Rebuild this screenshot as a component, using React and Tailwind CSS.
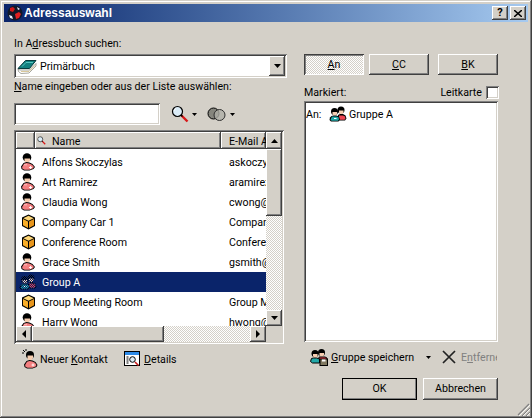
const outset = "shadow-[inset_-1px_-1px_0_#404040,inset_1px_1px_0_#ffffff,inset_-2px_-2px_0_#808080,inset_2px_2px_0_#d4d0c8]";
const inset = "shadow-[inset_1px_1px_0_#808080,inset_-1px_-1px_0_#ffffff,inset_2px_2px_0_#404040,inset_-2px_-2px_0_#d4d0c8]";
const dither = "bg-[repeating-conic-gradient(#ffffff_0_25%,#d4d0c8_0_50%)] bg-[length:2px_2px]";

const Tri = ({ d = "down", small }) => {
  const p = { down: "0,0 7,0 3.5,4", up: "0,4 7,4 3.5,0", left: "4,0 4,8 0,4", right: "0,0 0,8 4,4" }[d];
  const side = d === "left" || d === "right";
  const box = side ? "0 0 4 8" : "0 0 7 4";
  return <svg width={side ? 4 : small ? 5 : 7} height={side ? 8 : small ? 3 : 4} viewBox={box}><polygon points={p} fill="#000" /></svg>;
};

const Person = () => (
  <svg width="16" height="18" viewBox="0 0 16 18">
    <ellipse cx="7" cy="4.500" rx="4.300" ry="4.200" fill="#000" />
    <path d="M4.500 5.500h5.500v2l-1.500 2h-3l-1-1.500z" fill="#f6cdb0" />
    <path d="M3.500 10l3-1 3 .5 3 1.500 2.500 3-1.500 2-4 1.500H4l-2.500-1.500L1 13.500z" fill="#000" />
    <path d="M4 10.800l2.500-.8 2.800.5 2.700 1.300 2 2.300-1.300 1.500-3.200 1.200H4.500l-2-1.100-.4-1.700z" fill="#f47f80" />
    <path d="M4 11.800h3" stroke="#ffc4c0" />
    <path d="M9 14.500h3M10.500 13v3" stroke="#fff" strokeWidth=".9" />
  </svg>
);
const Cube = () => (
  <svg width="15" height="16" viewBox="0 0 15 16">
    <path d="M7.500 .5l6.500 3v8.500l-6.500 3.500-6.500-3.500V3.500z" fill="#000" />
    <path d="M7.500 1.800l5.200 2.400-5.200 2.500-5.200-2.500z" fill="#ffd777" />
    <path d="M2 5l5 2.400V14l-5-2.700z" fill="#f8ae2a" />
    <path d="M8 7.400L13 5v6.300L8 14z" fill="#e8961c" />
  </svg>
);
const Group = ({ sel }) => (
  <svg width="18" height="16" viewBox="0 0 18 16">
    <defs>
      <pattern id="navychk" width="2" height="2" patternUnits="userSpaceOnUse">
        <rect width="1" height="1" fill="#0a246a" />
        <rect x="1" y="1" width="1" height="1" fill="#0a246a" />
      </pattern>
    </defs>
    <ellipse cx="12" cy="4" rx="3.500" ry="3.500" fill="#000" />
    <path d="M10 4.500h4.500v2l-1 1.500h-2.500l-1-1.500z" fill="#f6cdb0" />
    <path d="M9 9l2-1h3l2.500 1.500 1 3-1.500 2H9z" fill="#000" />
    <path d="M10 9.500h4l2 1 .5 2-1 1.200H10z" fill="#ee4450" />
    <ellipse cx="5.500" cy="5.500" rx="3.500" ry="3.500" fill="#000" />
    <path d="M3.500 6h4.500v2l-1 1.500H4.500l-1-1.500z" fill="#f6cdb0" />
    <path d="M2.500 10l2-.5h3l2.500 1 1 3-1.500 2H2L.5 14l.5-2.500z" fill="#000" />
    <path d="M3 10.500h4.500l2 .7.5 2-1 1.500H2.500L1.500 13.500z" fill="#22a8a8" />
    <path d="M5 12.500h2.500" stroke="#fff" />
    {sel && <rect width="18" height="16" fill="url(#navychk)" />}
  </svg>
);
const Book = () => (
  <svg width="20" height="15" viewBox="0 0 20 15">
    <path d="M1 9.500L8.500 1.500H19l-6.500 8z" fill="#12807f" stroke="#08393c" />
    <path d="M5 7.500l4-4h7" stroke="#58c4c0" fill="none" />
    <path d="M1 10l.5 2.500 2.500 2 8-.5 7-7V4.500l-6.500 6.500H3z" fill="#fff" stroke="#6b6b60" strokeWidth=".6" />
    <path d="M4 12.500h8l6-6" stroke="#c8b070" strokeWidth=".7" fill="none" />
  </svg>
);
const Globe = () => (
  <svg width="16" height="16" viewBox="0 0 16 16">
    <circle cx="8" cy="8" r="7.500" fill="#101828" />
    <path d="M3 3l3-1 2 2-2 3-3-1z" fill="#d01818" />
    <path d="M8 9l4-2 2 2-2 4-3 1z" fill="#e02020" />
    <path d="M10 2l3 2-2 1zM2 10l3 1 1 3-3-1z" fill="#e8f0ff" />
  </svg>
);
const Mag = ({ s = 18 }) => (
  <svg width={s} height={s} viewBox="0 0 18 18">
    <circle cx="6.500" cy="6.500" r="5" fill="#dbecf7" stroke="#000" strokeWidth="1.200" />
    <path d="M5 3.500a3 3 0 0 0-2 2.500" stroke="#fff" fill="none" />
    <path d="M10.500 10.500l6 6" stroke="#d81818" strokeWidth="2.400" />
    <path d="M10 10l1.500 1.500" stroke="#000" strokeWidth="1.500" />
  </svg>
);
const Circles = () => (
  <svg width="19" height="15" viewBox="0 0 19 15">
    <circle cx="6.500" cy="6.500" r="5.500" fill="#85857d" stroke="#000" />
    <circle cx="12.500" cy="8" r="5.500" fill="#aeaea6" fillOpacity=".8" stroke="#303030" />
  </svg>
);
const NewContact = () => (
  <svg width="16" height="20" viewBox="0 0 16 20">
    <path d="M1 1l2 2M4 0v2M0 4h2" stroke="#000" />
    <ellipse cx="8" cy="6" rx="4" ry="4" fill="#000" />
    <path d="M5.500 6.500h5.500v2.500l-1.500 2h-3l-1-1.500z" fill="#f6cdb0" />
    <path d="M4.500 12l3-1 3 .5 3 1.500 2 3-1 2-4 1.500H5l-2.500-1.500L2 15.500z" fill="#000" />
    <path d="M5 12.800l2.500-.8 2.800.5 2.700 1.300 1.500 2.300-.8 1.500-3.200 1.200H5.500l-2-1.100-.4-1.700z" fill="#f47f80" />
    <path d="M9.500 16h3M11 14.500v3" stroke="#fff" strokeWidth=".9" />
  </svg>
);
const DetailsIcon = () => (
  <svg width="16" height="16" viewBox="0 0 16 16">
    <rect x=".5" y=".5" width="15" height="14" fill="#fff" stroke="#000" />
    <rect x="1" y="1" width="14" height="3" fill="#2c8ae8" />
    <path d="M2.500 6h2M2.500 8h2M2.500 10h2M2.500 12h2" stroke="#000" />
    <circle cx="8.500" cy="8.500" r="2.800" fill="#dbecf7" stroke="#000" />
    <path d="M11 11l3.500 3.500" stroke="#c81818" strokeWidth="1.600" />
  </svg>
);
const SaveGroup = () => (
  <svg width="18" height="17" viewBox="0 0 18 17">
    <ellipse cx="11.500" cy="3.500" rx="3.500" ry="3.500" fill="#000" />
    <path d="M9.500 4h4.500v2l-1 1.500h-2.500l-1-1.500z" fill="#f6cdb0" />
    <path d="M9 8h6l2 1v2H9z" fill="#e8404a" stroke="#000" />
    <ellipse cx="5" cy="4.500" rx="3.500" ry="3.500" fill="#000" />
    <path d="M3 5h4.500v2l-1 1.500H4l-1-1.500z" fill="#f6cdb0" />
    <path d="M1.500 9.500l2-.5h3l3 1v4H2.500L.5 12.500z" fill="#22a8a8" stroke="#000" />
    <rect x="10" y="10" width="7.500" height="6.500" fill="#807860" stroke="#000" />
    <rect x="12" y="10.500" width="3.500" height="2" fill="#fff" />
  </svg>
);
const XIcon = () => (
  <svg width="14" height="14" viewBox="0 0 14 14">
    <path d="M1 1l12 12M13 1L1 13" stroke="#222" strokeWidth="1.700" />
  </svg>
);

const rows = [
  ["p", "Alfons Skoczylas", "askoczylas"],
  ["p", "Art Ramirez", "aramirez@"],
  ["p", "Claudia Wong", "cwong@s"],
  ["c", "Company Car 1", "Company"],
  ["c", "Conference Room", "Conference"],
  ["p", "Grace Smith", "gsmith@s"],
  ["g", "Group A", ""],
  ["c", "Group Meeting Room", "Group Mee"],
  ["p", "Harry Wong", "hwong@s"],
];

const SmallBtn = ({ children }) => (
  <div className={`w-[16px] h-[16px] shrink-0 flex items-center justify-center bg-[#d4d0c8] ${outset}`}>{children}</div>
);

export default function App() {
  return (
    <div className={`relative w-[532px] h-[418px] overflow-hidden flex flex-col bg-[#d4d0c8] text-[10.65px] leading-[14px] text-black p-[4px] font-['Roboto',sans-serif] shadow-[inset_-1px_-1px_0_#404040,inset_1px_1px_0_#d4d0c8,inset_-2px_-2px_0_#808080,inset_2px_2px_0_#ffffff]`}>
      {/* Title bar */}
      <div className="h-[18px] shrink-0 flex items-center pl-[3px] pr-[2px] bg-gradient-to-r from-[#0a246a] to-[#a6caf0]">
        <Globe />
        <span className="ml-[1px] text-white font-bold text-[12px] font-['Liberation_Sans',sans-serif]">Adressauswahl</span>
        <div className="ml-auto flex">
          <div className={`w-[16px] h-[14px] flex items-center justify-center bg-[#d4d0c8] font-bold text-[11px] ${outset}`}>?</div>
          <div className={`ml-[2px] w-[16px] h-[14px] flex items-center justify-center bg-[#d4d0c8] ${outset}`}>
            <svg width="8" height="7" viewBox="0 0 8 7"><path d="M0 0l8 7M8 0L0 7" stroke="#000" strokeWidth="1.500" /></svg>
          </div>
        </div>
      </div>

      {/* Body */}
      <div className="flex flex-1 pl-[10px]">
        {/* Left column */}
        <div className="w-[270px] shrink-0 flex flex-col">
          <div className="mt-[15px] h-[13px] whitespace-nowrap">In A<u>d</u>ressbuch suchen:</div>
          <div className={`mt-[4px] h-[24px] w-[273px] flex items-center bg-white pl-[3px] pr-[2px] ${inset}`}>
            <Book />
            <span className="ml-[3px] pt-[2px]">Primärbuch</span>
            <div className={`ml-auto w-[16px] h-[20px] flex items-center justify-center bg-[#d4d0c8] ${outset}`}><Tri /></div>
          </div>
          <div className="mt-[2px] h-[13px] whitespace-nowrap"><u>N</u>ame eingeben oder aus der Liste auswählen:</div>
          <div className="mt-[10px] h-[22px] flex items-center">
            <div className={`w-[146px] h-[22px] bg-white ${inset}`} />
            <div className="ml-[11px]"><Mag /></div>
            <div className="ml-[3px]"><Tri small /></div>
            <div className="ml-[10px]"><Circles /></div>
            <div className="ml-[4px]"><Tri small /></div>
          </div>
          {/* List */}
          <div className={`mt-[5px] w-[270px] h-[214px] p-[2px] flex bg-[#d4d0c8] ${inset}`}>
            <div className="w-[250px] h-[210px] flex flex-col">
              <div className="h-[17px] shrink-0 flex">
                <div className={`w-[19px] ${outset}`} />
                <div className={`w-[186px] flex items-center pl-[2px] ${outset}`}>
                  <Mag s={9} />
                  <span className="ml-[6px] pt-[2px]">Name</span>
                </div>
                <div className={`w-[45px] flex items-center pl-[8px] pt-[2px] overflow-hidden whitespace-nowrap ${outset}`}>E-Mail Adresse</div>
              </div>
              <div className="h-[177px] bg-white pt-[3px] overflow-hidden">
                {rows.map(([t, n, e]) => {
                  const sel = n === "Group A";
                  return (
                    <div key={n} className={`h-[20px] flex items-center whitespace-nowrap ${sel ? "bg-[#0a246a] text-white" : ""}`}>
                      <div className="w-[26px] shrink-0 flex justify-center pr-[2px]">
                        {t === "p" ? <Person /> : t === "c" ? <Cube /> : <Group sel />}
                      </div>
                      <div className="w-[187px] shrink-0 pt-[2px]">{n}</div>
                      <div className="w-[37px] shrink-0 pt-[2px] overflow-hidden">{e}</div>
                    </div>
                  );
                })}
              </div>
              <div className="h-[16px] shrink-0 flex">
                <SmallBtn><Tri d="left" /></SmallBtn>
                <div className={`w-[132px] bg-[#d4d0c8] ${outset}`} />
                <div className={`flex-1 ${dither}`} />
                <SmallBtn><Tri d="right" /></SmallBtn>
              </div>
            </div>
            <div className="w-[16px] h-[210px] flex flex-col">
              <div className={`h-[17px] flex items-center justify-center bg-[#d4d0c8] ${outset}`}><Tri d="up" /></div>
              <div className={`h-[67px] bg-[#d4d0c8] ${outset}`} />
              <div className={`h-[94px] ${dither}`} />
              <SmallBtn><Tri /></SmallBtn>
            </div>
          </div>
          <div className="mt-[5px] h-[20px] flex items-center pl-[8px] whitespace-nowrap">
            <NewContact />
            <span className="ml-[2px] w-[84px] pt-[2px]">Neuer <u>K</u>ontakt</span>
            <DetailsIcon />
            <span className="ml-[4px] pt-[2px]"><u>D</u>etails</span>
          </div>
        </div>

        {/* Right column */}
        <div className="ml-[20px] w-[194px] shrink-0 flex flex-col">
          <div className="mt-[32px] h-[21px] flex">
            <div className={`w-[60px] flex items-center justify-center ${dither} shadow-[inset_1px_1px_0_#404040,inset_-1px_-1px_0_#ffffff,inset_2px_2px_0_#808080]`}><span><u>A</u>n</span></div>
            <div className={`ml-[5px] w-[60px] flex items-center justify-center ${outset}`}><span><u>C</u>C</span></div>
            <div className={`ml-[9px] w-[60px] flex items-center justify-center ${outset}`}><span><u>B</u>K</span></div>
          </div>
          <div className="mt-[9px] h-[16px] flex items-center">
            <span className="pt-[2px]">Markiert:</span>
            <span className="ml-auto pt-[2px]">Leitkarte</span>
            <div className={`ml-[4px] mr-[-1px] w-[13px] h-[13px] bg-white ${inset}`} />
          </div>
          <div className={`mt-[1px] h-[241px] bg-white pl-[2px] pt-[3px] ${inset}`}>
            <div className="h-[16px] mt-[2px] flex items-center">
              <span className="w-[23px] pt-[2px]">An:</span>
              <Group />
              <span className="ml-[2px] pt-[2px]">Gruppe A</span>
            </div>
          </div>
          <div className="mt-[6px] h-[18px] flex items-center pl-[6px] whitespace-nowrap">
            <SaveGroup />
            <span className="ml-[3px] w-[95px] pt-[2px]"><u>G</u>ruppe speichern</span>
            <Tri small />
            <div className="ml-[11px]"><XIcon /></div>
            <span className="ml-[5px] w-[36px] pt-[2px] overflow-hidden text-[#808080]">E<u>n</u>tfernen</span>
          </div>
          <div className="mt-[12px] flex justify-end">
            <div className={`w-[75px] h-[22px] flex items-center justify-center outline outline-1 -outline-offset-1 outline-black ${outset}`}>OK</div>
            <div className={`ml-[6px] w-[75px] h-[22px] flex items-center justify-center ${outset}`}>Abbrechen</div>
          </div>
        </div>
      </div>
      {/* Resize grip */}
      <svg className="absolute right-[2px] bottom-[2px]" width="13" height="13" viewBox="0 0 13 13">
        <path d="M12 1L1 12M13 5L5 13M13 9l-4 4" stroke="#808080" strokeWidth="1.200" />
        <path d="M13 2L2 13M13 6l-7 7M13 10l-3 3" stroke="#fff" strokeWidth=".8" />
      </svg>
    </div>
  );
}
